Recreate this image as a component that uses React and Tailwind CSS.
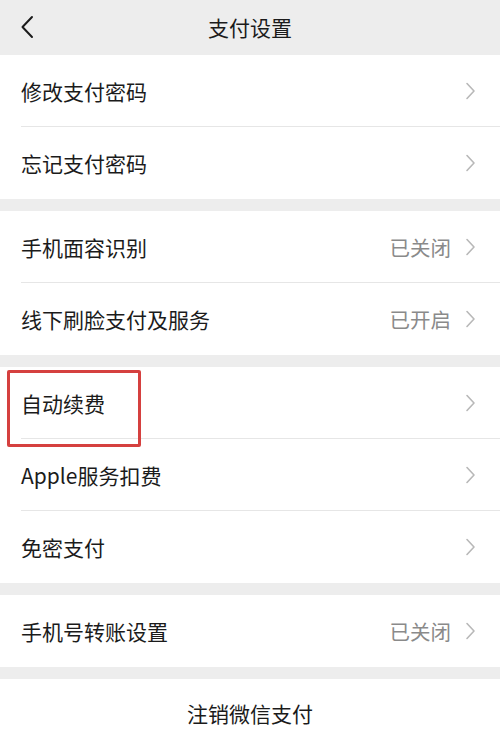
import React from 'react';

const Chevron = () => (
    <svg width="11" height="20" viewBox="0 0 11 20" fill="none" className="shrink-0">
        <path d="M2 2.5 L9 10 L2 17.5" stroke="#b8b8b8" strokeWidth="1.6" strokeLinecap="round" strokeLinejoin="round" />
    </svg>
);

const Row = ({ label, value, divider, highlight }) => (
    <div className="relative h-[72px] flex items-center pl-[21px] pr-[24px]">
        <span className="flex-1 text-[21px] text-[#1b1b1b] leading-none">{label}</span>
        {value && <span className="text-[20.5px] text-[#8a8a8a] leading-none mr-[14px]">{value}</span>}
        <Chevron />
        {divider && <div className="absolute left-[21px] right-0 bottom-0 h-px bg-[#e6e6e6]"></div>}
        {highlight && (
            <div className="absolute left-[7px] top-[3px] w-[134px] h-[77px] border-[3px] border-[#d5403f] rounded-[2px] z-10"></div>
        )}
    </div>
);

const Group = ({ rows }) => (
    <div className="bg-white">
        {rows.map((r, i) => (
            <Row key={r.label} {...r} divider={i < rows.length - 1} />
        ))}
    </div>
);

const App = () => {
    return (
        <div
            className="w-[500px] h-[734px] overflow-hidden bg-[#ededed] flex flex-col"
            style={{ fontFamily: '"Noto Sans CJK SC", "Noto Sans", sans-serif' }}
        >
            <div className="h-[55px] shrink-0 relative flex items-center justify-center">
                <svg width="14" height="24" viewBox="0 0 14 24" fill="none" className="absolute left-[20px] top-[15px]">
                    <path d="M12 2 L2.5 12 L12 22" stroke="#1b1b1b" strokeWidth="2" strokeLinecap="round" strokeLinejoin="round" />
                </svg>
                <span className="text-[21px] text-[#1b1b1b] leading-none">支付设置</span>
            </div>

            <div className="flex flex-col gap-[12px]">
                <Group rows={[{ label: '修改支付密码' }, { label: '忘记支付密码' }]} />
                <Group
                    rows={[
                        { label: '手机面容识别', value: '已关闭' },
                        { label: '线下刷脸支付及服务', value: '已开启' },
                    ]}
                />
                <Group
                    rows={[
                        { label: '自动续费', highlight: true },
                        { label: 'Apple服务扣费' },
                        { label: '免密支付' },
                    ]}
                />
                <Group rows={[{ label: '手机号转账设置', value: '已关闭' }]} />
                <div className="bg-white h-[80px] flex justify-center pt-[24px]">
                    <span className="text-[21px] text-[#1b1b1b] leading-none">注销微信支付</span>
                </div>
            </div>
        </div>
    );
};

export default App;
